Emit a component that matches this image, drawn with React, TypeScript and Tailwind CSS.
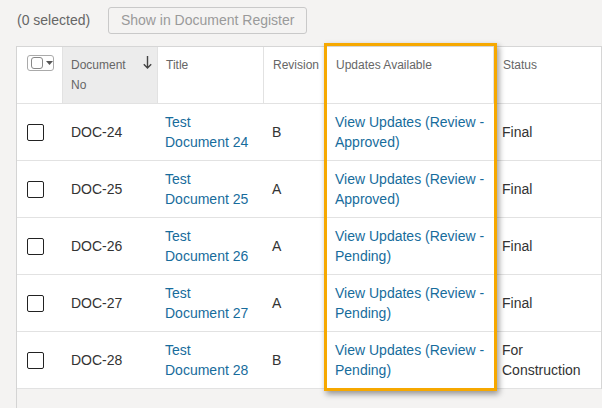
import React from 'react'

const rows = [
  { no: 'DOC-24', title: 'Document 24', rev: 'B', review: 'Approved', status: ['Final'] },
  { no: 'DOC-25', title: 'Document 25', rev: 'A', review: 'Approved', status: ['Final'] },
  { no: 'DOC-26', title: 'Document 26', rev: 'A', review: 'Pending', status: ['Final'] },
  { no: 'DOC-27', title: 'Document 27', rev: 'A', review: 'Pending', status: ['Final'] },
  { no: 'DOC-28', title: 'Document 28', rev: 'B', review: 'Pending', status: ['For', 'Construction'] },
]

const cols = 'grid grid-cols-[46px_95px_106px_62px_168px_108px]'

export default function App() {
  return (
    <div
      className="relative w-[602px] h-[408px] overflow-hidden bg-[#f4f3f2] text-[14px] text-[#333]"
      style={{ fontFamily: '"Liberation Sans", Arial, sans-serif' }}
    >
      <div className="h-[46px] flex items-center pl-[17px] pb-[5px]">
        <span className="text-[#666]">(0 selected)</span>
        <button className="ml-[18px] h-[27px] w-[199px] rounded-[3px] border border-[#c9c9c9] bg-[#f4f3f2] text-[#9a9a9a]">
          Show in Document Register
        </button>
      </div>

      <div className="ml-[16px] h-[362px] border-l border-[#d4d4d4]">
        <div className="bg-white border-t border-r border-[#d6d6d6]">
          <div className={`${cols} h-[57px] border-b border-[#e2e2e2] text-[12px] text-[#666] leading-[20px]`}>
            <div className="border-r border-[#e2e2e2] pl-[10px] pt-[8px]">
              <div className="flex items-center gap-[3px] w-[27px] h-[16px] rounded-[3px] border border-[#aaa] pl-[3px]">
                <div className="w-[12px] h-[12px] rounded-[3px] border border-[#888]" />
                <svg width="7" height="4" viewBox="0 0 7 4">
                  <path d="M0 0h7L3.5 4z" fill="#555" />
                </svg>
              </div>
            </div>
            <div className="relative bg-[#ececec] border-r border-[#e2e2e2] pl-[8px] pt-[8px]">
              Document
              <br />
              No
              <svg className="absolute right-[5px] top-[9px]" width="9" height="13" viewBox="0 0 9 13">
                <path d="M4.5 0v12M0.8 8.2l3.7 3.8 3.7-3.8" stroke="#444" strokeWidth="1.4" fill="none" />
              </svg>
            </div>
            <div className="border-r border-[#e2e2e2] pl-[8px] pt-[8px]">Title</div>
            <div className="border-r border-[#e2e2e2] pl-[9px] pt-[8px]">Revision</div>
            <div className="border-r border-[#e2e2e2] pl-[10px] pt-[8px]">Updates Available</div>
            <div className="pl-[9px] pt-[8px]">Status</div>
          </div>

          {rows.map((r) => (
            <div key={r.no} className={`${cols} h-[57px] border-b border-[#e2e2e2] leading-[20px] items-center`}>
              <div className="pl-[10px]">
                <div className="w-[17px] h-[17px] rounded-[2px] border-[1.5px] border-[#222] bg-white" />
              </div>
              <div className="pl-[8px]">{r.no}</div>
              <div className="pl-[7px] text-[#176c9c]">
                Test
                <br />
                {r.title}
              </div>
              <div className="pl-[8px]">{r.rev}</div>
              <div className="pl-[9px] text-[#176c9c]">
                View Updates (Review -
                <br />
                {r.review})
              </div>
              <div className="pl-[8px]">
                {r.status.map((s) => (
                  <div key={s}>{s}</div>
                ))}
              </div>
            </div>
          ))}
        </div>
      </div>

      <div className="absolute left-[324px] top-[43px] w-[173px] h-[348px] border-[3.5px] border-[#f6a800] shadow-[2px_3px_6px_rgba(0,0,0,0.4)]" />
    </div>
  )
}
